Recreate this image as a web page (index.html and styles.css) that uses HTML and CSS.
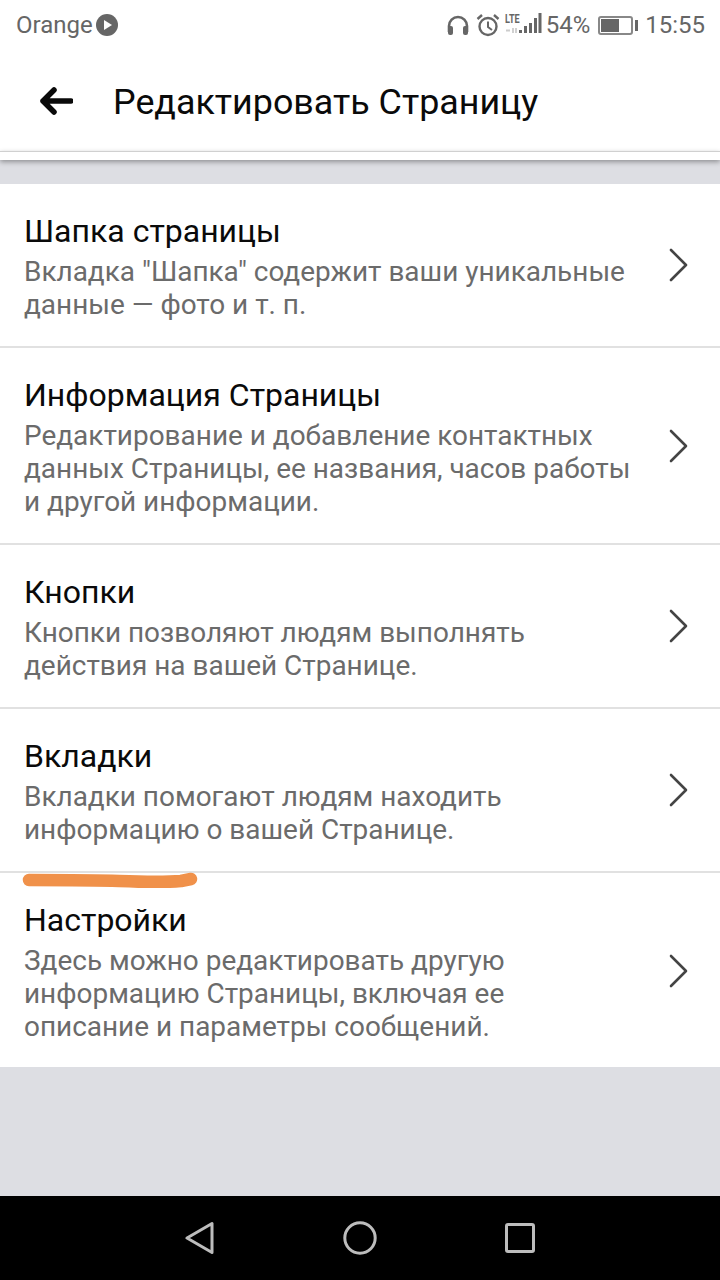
FILE: index.html
```html
<!DOCTYPE html>
<html lang="ru">
<head>
  <meta charset="UTF-8">
  <meta name="viewport" content="width=device-width, initial-scale=1.0">
  <title>Редактировать Страницу</title>
  <link rel="stylesheet" href="styles.css">
</head>
<body>
  <div class="phone">
    <div class="statusbar">
      <div class="carrier">
        <span>Orange</span>
        <svg class="play-icon" width="22" height="22" viewBox="0 0 22 22"><circle cx="11" cy="11" r="11" fill="#666"/><path d="M8 6l8 5-8 5z" fill="#fff"/></svg>
      </div>
      <div class="status-right">
        <svg class="st-headphones" width="24" height="22" viewBox="0 0 24 22"><path d="M3 18v-6a9 9 0 0 1 18 0v6" fill="none" stroke="#666" stroke-width="2.6"/><rect x="2" y="12" width="5" height="9" rx="2" fill="#666"/><rect x="17" y="12" width="5" height="9" rx="2" fill="#666"/></svg>
        <svg class="st-alarm" width="24" height="24" viewBox="0 0 24 24"><circle cx="12" cy="13.5" r="8.5" fill="none" stroke="#666" stroke-width="2.4"/><path d="M12 8.5v5.5l4 3" fill="none" stroke="#666" stroke-width="2"/><path d="M1.5 6L6 2M22.5 6L18 2" stroke="#666" stroke-width="2.4"/></svg>
        <div class="st-signal">
          <span class="lte">LTE</span>
          <svg width="38" height="26" viewBox="0 0 38 26"><path d="M2 18.500h4M9 16v5M12 16v5" stroke="#ccc" stroke-width="1.800"/><rect x="15" y="18" width="3" height="3" fill="#666"/><rect x="20" y="14" width="3" height="7" fill="#666"/><rect x="25" y="11" width="3" height="10" fill="#666"/><rect x="30" y="6" width="3" height="15" fill="#666"/><rect x="34.500" y="1" width="3" height="20" fill="#666"/></svg>
        </div>
        <span class="battery-pct">54%</span>
        <div class="battery"><div class="battery-fill"></div></div>
        <div class="battery-cap"></div>
        <span class="clock">15:55</span>
      </div>
    </div>

    <div class="appbar">
      <svg class="back-icon" width="34" height="28" viewBox="0 0 34 28"><path d="M15 3L4 14l11 11M4 14h28" fill="none" stroke="#0a0a0a" stroke-width="5.500" stroke-linecap="round" stroke-linejoin="round"/></svg>
      <div class="appbar-title">Редактировать Страницу</div>
    </div>
    <div class="appbar-line"></div>

    <div class="content">
      <div class="menu">
        <div class="menu-item">
          <div class="menu-text">
            <div class="menu-title">Шапка страницы</div>
            <div class="menu-desc">Вкладка "Шапка" содержит ваши уникальные<br>данные — фото и т. п.</div>
          </div>
          <svg class="chevron" width="20" height="34" viewBox="0 0 20 34"><path d="M2 2l15 15L2 32" fill="none" stroke="#444" stroke-width="2.600" stroke-linecap="round" stroke-linejoin="round"/></svg>
        </div>
        <div class="menu-item">
          <div class="menu-text">
            <div class="menu-title">Информация Страницы</div>
            <div class="menu-desc">Редактирование и добавление контактных<br>данных Страницы, ее названия, часов работы<br>и другой информации.</div>
          </div>
          <svg class="chevron" width="20" height="34" viewBox="0 0 20 34"><path d="M2 2l15 15L2 32" fill="none" stroke="#444" stroke-width="2.600" stroke-linecap="round" stroke-linejoin="round"/></svg>
        </div>
        <div class="menu-item">
          <div class="menu-text">
            <div class="menu-title">Кнопки</div>
            <div class="menu-desc">Кнопки позволяют людям выполнять<br>действия на вашей Странице.</div>
          </div>
          <svg class="chevron" width="20" height="34" viewBox="0 0 20 34"><path d="M2 2l15 15L2 32" fill="none" stroke="#444" stroke-width="2.600" stroke-linecap="round" stroke-linejoin="round"/></svg>
        </div>
        <div class="menu-item">
          <div class="menu-text">
            <div class="menu-title">Вкладки</div>
            <div class="menu-desc">Вкладки помогают людям находить<br>информацию о вашей Странице.</div>
          </div>
          <svg class="chevron" width="20" height="34" viewBox="0 0 20 34"><path d="M2 2l15 15L2 32" fill="none" stroke="#444" stroke-width="2.600" stroke-linecap="round" stroke-linejoin="round"/></svg>
          <svg class="marker" width="178" height="18" viewBox="0 0 178 18"><path d="M8 8c30 0 65 0 90 1s50 1 62 0l10-2" fill="none" stroke="#f0914a" stroke-width="12.500" stroke-linecap="round" stroke-linejoin="round"/></svg>
        </div>
        <div class="menu-item">
          <div class="menu-text">
            <div class="menu-title">Настройки</div>
            <div class="menu-desc">Здесь можно редактировать другую<br>информацию Страницы, включая ее<br>описание и параметры сообщений.</div>
          </div>
          <svg class="chevron" width="20" height="34" viewBox="0 0 20 34"><path d="M2 2l15 15L2 32" fill="none" stroke="#444" stroke-width="2.600" stroke-linecap="round" stroke-linejoin="round"/></svg>
        </div>
      </div>
    </div>

    <div class="navbar">
      <svg width="30" height="34" viewBox="0 0 30 34"><path d="M27 2.500V31.500L2 17z" fill="none" stroke="#bdbdbd" stroke-width="3" stroke-linejoin="round"/></svg>
      <svg width="34" height="34" viewBox="0 0 34 34"><circle cx="17" cy="17" r="15.200" fill="none" stroke="#bdbdbd" stroke-width="3"/></svg>
      <svg width="30" height="30" viewBox="0 0 30 30"><rect x="1.500" y="1.500" width="27" height="27" rx="1.500" fill="none" stroke="#bdbdbd" stroke-width="3"/></svg>
    </div>
  </div>
</body>
</html>
```

FILE: styles.css
```css
* {
  margin: 0;
  padding: 0;
  box-sizing: border-box;
}

body {
  background: #dddee3;
  font-family: Roboto, 'Liberation Sans', sans-serif;
}

.phone {
  width: 720px;
  height: 1280px;
  display: flex;
  flex-direction: column;
  overflow: hidden;
}

.statusbar {
  height: 50px;
  background: white;
  color: #666;
  display: flex;
  justify-content: space-between;
  align-items: center;
  padding: 0 15px 0 16px;
}

.carrier {
  display: flex;
  align-items: center;
  gap: 3px;
  font-size: 24px;
}

.status-right {
  display: flex;
  align-items: center;
  font-size: 24px;
}

.st-headphones {
  margin-right: 6px;
}

.st-alarm {
  margin-right: 4px;
}

.st-signal {
  position: relative;
  width: 38px;
  height: 26px;
  margin-right: 4px;
}

.lte {
  position: absolute;
  left: 1px;
  top: -1px;
  font-size: 13px;
  font-weight: 700;
  transform: scaleX(0.7);
  transform-origin: left top;
}

.battery-pct {
  margin-right: 8px;
}

.battery {
  width: 35px;
  height: 19px;
  border: 2px solid #888;
  border-radius: 3px;
  padding: 1px;
}

.battery-fill {
  width: 60%;
  height: 100%;
  background: #666;
}

.battery-cap {
  width: 3px;
  height: 11px;
  background: #666;
  margin-left: 2px;
  margin-right: 7px;
}

.appbar {
  height: 101px;
  background: white;
  display: flex;
  align-items: center;
  padding-left: 39px;
  gap: 40px;
}

.appbar-title {
  font-size: 35.850px;
  color: #0a0a0a;
  white-space: nowrap;
  position: relative;
  top: 1px;
}

.appbar-line {
  height: 9px;
  background: white;
  border-top: 1px solid #d0d0d0;
  box-shadow: 0 2px 5px rgba(0,0,0,0.35);
  position: relative;
}

.content {
  flex: 1;
  padding-top: 24px;
  background: #dddee3;
}

.menu {
  background: white;
}

.menu-item {
  position: relative;
  display: flex;
  justify-content: space-between;
  align-items: center;
  padding: 29px 31px 25px 24px;
  border-bottom: 2px solid #e1e1e1;
}

.menu-item:last-child {
  border-bottom: none;
  padding-bottom: 24px;
}

.menu-title {
  font-size: 32px;
  line-height: 36px;
  color: #0a0a0a;
  margin-bottom: 6px;
}

.menu-desc {
  font-size: 27.950px;
  line-height: 33px;
  color: #6b6b6b;
  white-space: nowrap;
}

.chevron {
  flex-shrink: 0;
  margin-top: -4px;
}

.marker {
  position: absolute;
  left: 21px;
  bottom: -19px;
  z-index: 2;
}

.navbar {
  height: 84px;
  background: black;
  display: flex;
  justify-content: space-between;
  align-items: center;
  padding: 0 185px;
}
```
